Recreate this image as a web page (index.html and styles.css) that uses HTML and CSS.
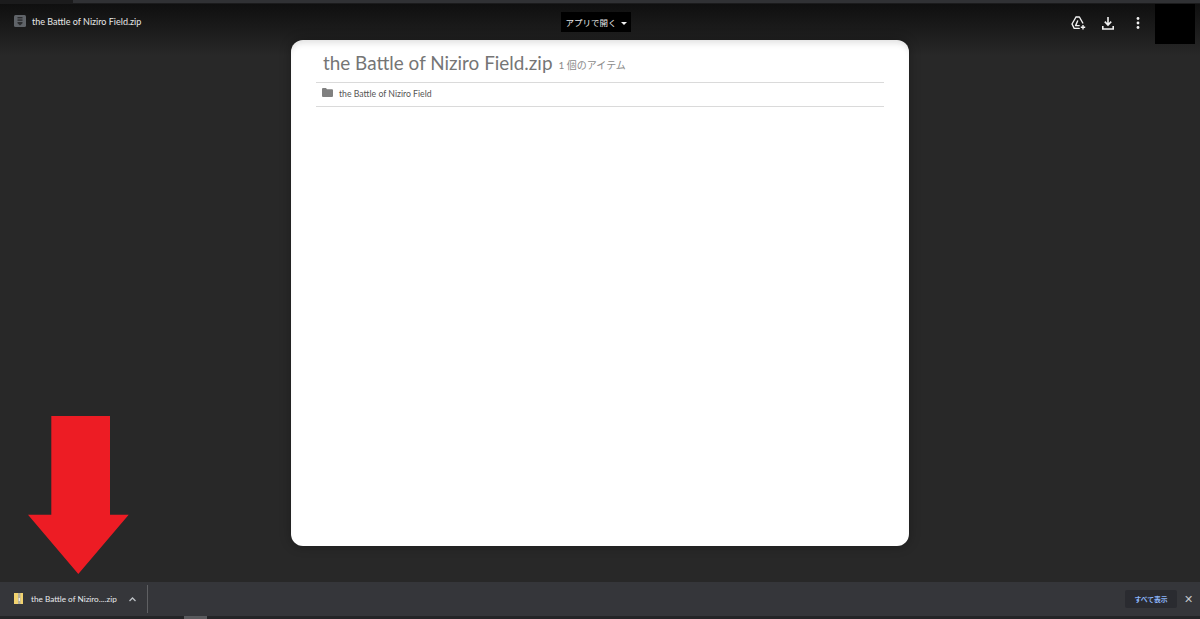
FILE: index.html
```html
<!DOCTYPE html>
<html lang="ja">
<head>
  <meta charset="UTF-8">
  <title>the Battle of Niziro Field.zip</title>
  <link rel="stylesheet" href="styles.css">
</head>
<body>
  <div class="top-strip"><div class="top-strip-light"></div></div>

  <!-- Viewer -->
  <div class="viewer">
    <div class="toolbar">
      <div class="file-title">
        <svg class="zip-icon" width="12" height="12" viewBox="0 0 12 12">
          <rect width="12" height="12" rx="1.500" fill="#5f6368"/>
          <rect x="3.500" y="2" width="5" height="1.400" fill="#2b2c2e"/>
          <rect x="3.500" y="4.400" width="5" height="1.400" fill="#2b2c2e"/>
          <path d="M3.500 6.900h5v1.400L6 10.400 3.500 8.300z" fill="#2b2c2e"/>
        </svg>
        <span>the Battle of Niziro Field.zip</span>
      </div>
      <button class="open-with">アプリで開く<span class="caret"></span></button>
      <div class="toolbar-icons">
        <div class="icon-slot">
          <svg width="15" height="14" viewBox="0 0 15 14" fill="none" stroke="#f1f1f1" stroke-width="1.400" stroke-linejoin="round" stroke-linecap="round">
            <path d="M5 1h3.400l3.400 6M5 1L1 8l2.200 4.400h5"/>
            <path d="M6.600 5L4.600 9.600h3.600"/>
            <path d="M12 9v4.500M9.800 11.200h4.400" stroke-linecap="butt"/>
          </svg>
        </div>
        <div class="icon-slot">
          <svg width="12" height="13" viewBox="0 0 12 13" fill="none" stroke="#f1f1f1" stroke-width="1.600">
            <path d="M6 0v7.500M2.800 4.600L6 8l3.200-3.400"/>
            <path d="M.8 9v3h10.400V9"/>
          </svg>
        </div>
        <div class="icon-slot">
          <svg width="4" height="12" viewBox="0 0 4 12" fill="#f1f1f1">
            <circle cx="2" cy="1.500" r="1.400"/>
            <circle cx="2" cy="6" r="1.400"/>
            <circle cx="2" cy="10.500" r="1.400"/>
          </svg>
        </div>
        <div class="blackout"></div>
      </div>
    </div>

    <div class="card">
      <div class="card-head">
        <h1>the Battle of Niziro Field.zip</h1>
        <span class="item-count">1 個のアイテム</span>
      </div>
      <div class="card-row">
        <svg width="11" height="9" viewBox="0 0 11 9"><path d="M0 1a1 1 0 0 1 1-1h3l1 1.200h5a1 1 0 0 1 1 1V8a1 1 0 0 1-1 1H1a1 1 0 0 1-1-1z" fill="#808080"/></svg>
        <span>the Battle of Niziro Field</span>
      </div>
    </div>

    <!-- Red arrow lying over the page -->
    <svg class="red-arrow" width="102" height="159" viewBox="0 0 102 159">
      <path d="M23.300 0H82V98.700H100.700L50.300 158L0 98.700H23.300z" fill="#ed1c24"/>
    </svg>
  </div>

  <!-- Download bar -->
  <div class="shelf">
    <div class="download-item">
      <svg class="zip-thumb" width="9" height="11" viewBox="0 0 9 11">
        <rect width="9" height="11" fill="#f2d36f"/>
        <rect x="4" width="2.500" height="11" fill="#b5b09a"/>
        <rect x="4.700" y="5" width="1.200" height="3" fill="#f4f4f0"/>
      </svg>
      <span class="download-name">the Battle of Niziro....zip</span>
      <svg class="chevron" width="7" height="5" viewBox="0 0 7 5" fill="none" stroke="#bdc1c6" stroke-width="1.300"><path d="M.5 4L3.500 1l3 3"/></svg>
    </div>
    <div class="shelf-right">
      <button class="show-all">すべて表示</button>
      <span class="close-x">✕</span>
    </div>
  </div>

  <div class="scrollbar"><div class="scroll-thumb"></div></div>
</body>
</html>
```

FILE: styles.css
```css
html, body {
  margin: 0;
  height: 100%;
}
body {
  width: 1200px;
  height: 619px;
  overflow: hidden;
  display: flex;
  flex-direction: column;
  background-color: #282828;
  font-family: Lato, "Noto Sans CJK JP", sans-serif;
}
.top-strip {
  height: 4px;
  background-color: #1b1b1c;
}
.top-strip-light {
  height: 3px;
  margin-left: 73px;
  background-color: #303134;
}
.viewer {
  position: relative;
  flex: 1;
  min-height: 0;
  background: linear-gradient(#0f0f0f 0, #282828 52px);
}
.toolbar {
  height: 36px;
  display: flex;
  align-items: center;
  justify-content: space-between;
  padding-left: 14px;
}
.file-title {
  width: 547px;
  margin-top: -2px;
  display: flex;
  align-items: center;
  gap: 6px;
  color: #e8e8e8;
  font-size: 9px;
}
.open-with {
  width: 70px;
  height: 20px;
  padding: 0;
  border: none;
  background-color: #000;
  color: #e8e8e8;
  font-family: inherit;
  font-size: 8.500px;
  display: flex;
  align-items: center;
  justify-content: center;
  gap: 4px;
}
.caret {
  width: 0;
  height: 0;
  border-left: 3.500px solid transparent;
  border-right: 3.500px solid transparent;
  border-top: 3.500px solid #f1f1f1;
  margin-top: 2px;
}
.toolbar-icons {
  width: 569px;
  padding-right: 5px;
  box-sizing: border-box;
  display: flex;
  align-items: center;
  justify-content: flex-end;
}
.icon-slot {
  width: 30px;
  margin-top: 2px;
  display: flex;
  justify-content: center;
}
.blackout {
  width: 40px;
  height: 40px;
  margin-left: 2px;
  margin-top: 4px;
  background-color: #000;
}
.card {
  width: 618px;
  height: 506px;
  margin: 0 auto;
  box-sizing: border-box;
  padding: 0 25px;
  background-color: #fff;
  border-radius: 12px;
  box-shadow: 0 0 12px rgba(0, 0, 0, 0.3), inset 0 6px 6px -3px rgba(0, 0, 0, 0.12);
}
.card-head {
  height: 42px;
  display: flex;
  align-items: center;
  padding-left: 7px;
  gap: 6px;
  border-bottom: 1px solid #dadada;
}
.card-head h1 {
  margin: 2px 0 0;
  font-size: 18.900px;
  font-weight: 400;
  color: #757575;
}
.item-count {
  margin-top: 6px;
  font-size: 10px;
  color: #8a8a8a;
}
.card-row {
  height: 23px;
  display: flex;
  align-items: center;
  gap: 6px;
  padding-left: 6px;
  border-bottom: 1px solid #dadada;
  font-size: 8.700px;
  color: #555;
}
.card-row svg {
  margin-top: -4px;
}
.card-row span {
  margin-top: -3px;
}
.red-arrow {
  position: absolute;
  left: 28px;
  top: 412px;
}
.shelf {
  height: 34px;
  display: flex;
  align-items: center;
  justify-content: space-between;
  background-color: #35363a;
}
.download-item {
  width: 148px;
  height: 28px;
  box-sizing: border-box;
  padding-left: 14px;
  display: flex;
  align-items: center;
  border-right: 1px solid #5f6063;
  color: #e8eaed;
  font-size: 8.200px;
}
.zip-thumb {
  margin-top: -2px;
}
.download-name {
  margin-left: 8px;
  width: 85px;
  white-space: nowrap;
}
.chevron {
  margin-left: 13px;
}
.shelf-right {
  display: flex;
  align-items: center;
  padding-right: 7px;
  gap: 7px;
}
.show-all {
  width: 52px;
  height: 18px;
  padding: 0;
  border: none;
  border-radius: 2px;
  background-color: #2a2b30;
  color: #8ab4f8;
  font-family: inherit;
  font-size: 6.800px;
  font-weight: 700;
}
.close-x {
  color: #c4c6ca;
  font-size: 11px;
}
.scrollbar {
  height: 3px;
  background-color: #242527;
}
.scroll-thumb {
  width: 23px;
  height: 3px;
  margin-left: 184px;
  background-color: #5a5b5e;
}
```
